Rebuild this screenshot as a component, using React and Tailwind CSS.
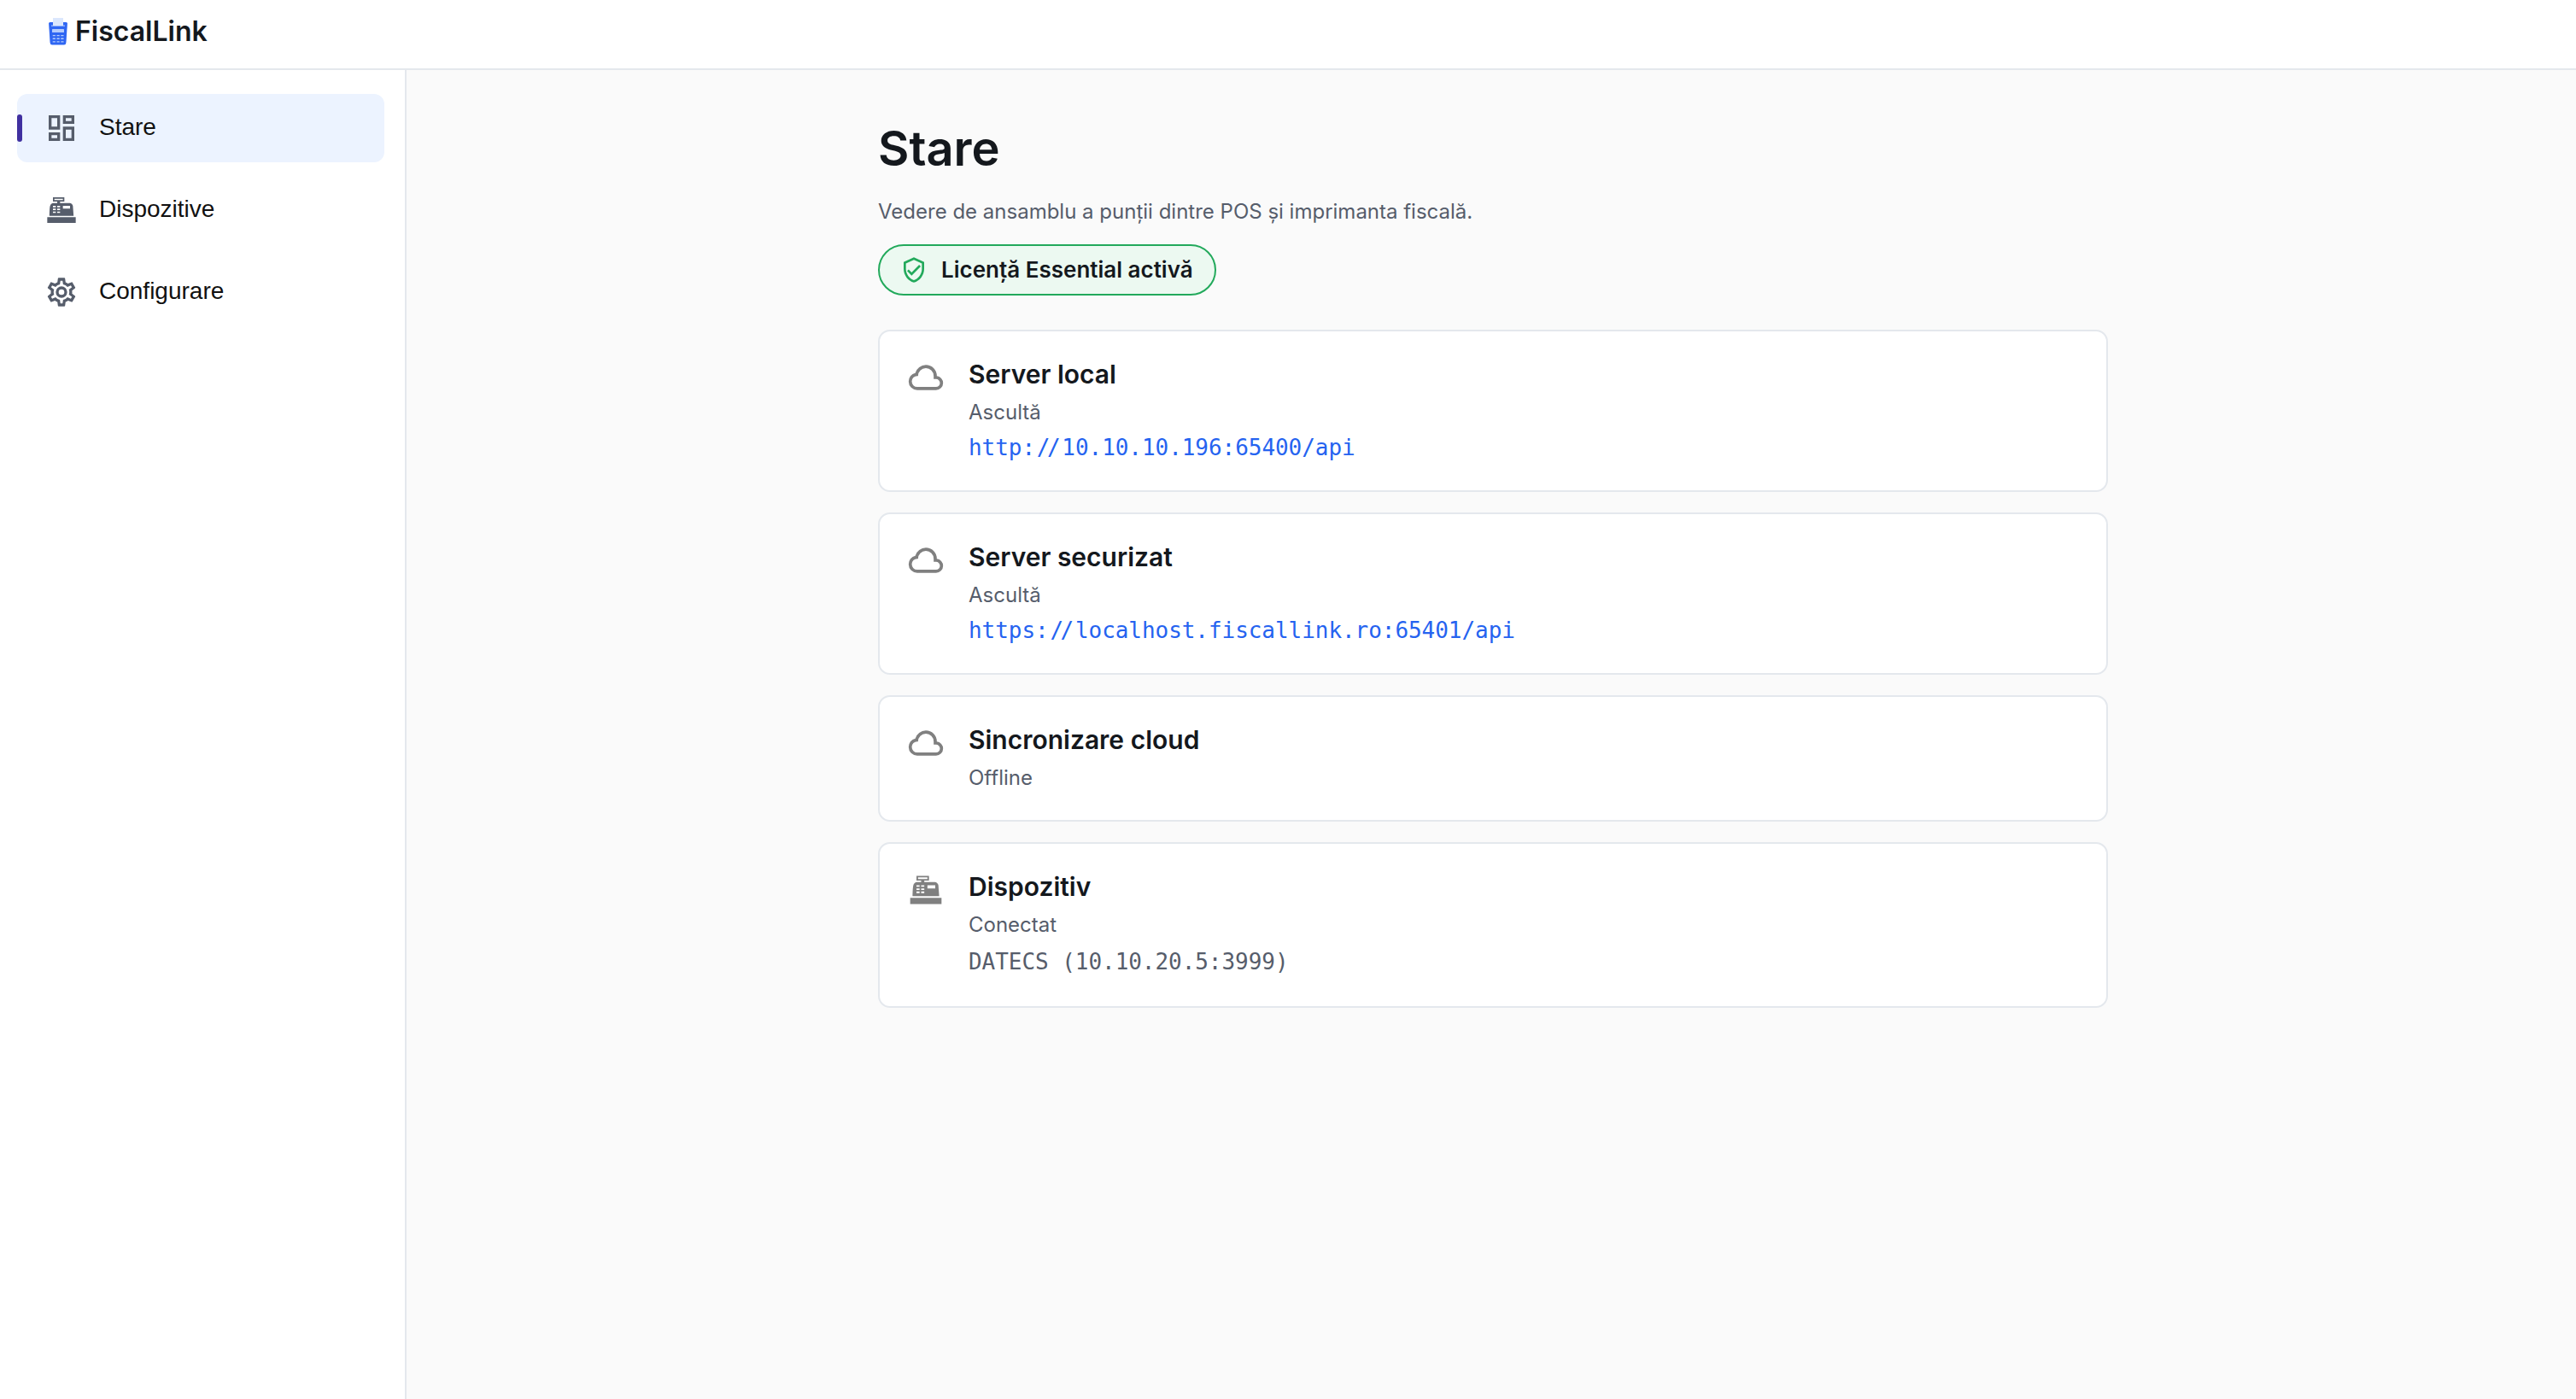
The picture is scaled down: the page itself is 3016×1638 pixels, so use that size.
import React from 'react';

const ICONS = {
  dashboard:
    'M19,5V7H15V5H19M9,5V11H5V5H9M19,13V19H15V13H19M9,17V19H5V17H9M21,3H13V9H21V3M11,3H3V13H11V3M21,11H13V21H21V11M11,15H3V21H11V15Z',
  register:
    'M2,17H22V21H2V17M6.25,7H9V6H6V3H14V6H11V7H17.8C18.8,7 19.8,8 20,9L20.5,16H3.5C3.55,14.2 3.6,10.5 4,9C4.25,8 5.25,7 6.25,7M13,9V11H18V9H13M6,9V10H8V9H6M9,9V10H11V9H9M6,11V12H8V11H6M9,11V12H11V11H9M6,13V14H8V13H6M9,13V14H11V13H9M7,4V5H13V4H7Z',
  cog:
    'M12,8A4,4 0 0,1 16,12A4,4 0 0,1 12,16A4,4 0 0,1 8,12A4,4 0 0,1 12,8M12,10A2,2 0 0,0 10,12A2,2 0 0,0 12,14A2,2 0 0,0 14,12A2,2 0 0,0 12,10M10,22C9.75,22 9.54,21.82 9.5,21.58L9.13,18.93C8.5,18.68 7.96,18.34 7.44,17.94L4.95,18.95C4.73,19.03 4.46,18.95 4.34,18.73L2.34,15.27C2.21,15.05 2.27,14.78 2.46,14.63L4.57,12.97L4.5,12L4.57,11L2.46,9.37C2.27,9.22 2.21,8.95 2.34,8.73L4.34,5.27C4.46,5.05 4.73,4.96 4.95,5.05L7.44,6.05C7.96,5.66 8.5,5.32 9.13,5.07L9.5,2.42C9.54,2.18 9.75,2 10,2H14C14.25,2 14.46,2.18 14.5,2.42L14.87,5.07C15.5,5.32 16.04,5.66 16.56,6.05L19.05,5.05C19.27,4.96 19.54,5.05 19.66,5.27L21.66,8.73C21.79,8.95 21.73,9.22 21.54,9.37L19.43,11L19.5,12L19.43,13L21.54,14.63C21.73,14.78 21.79,15.05 21.66,15.27L19.66,18.73C19.54,18.95 19.27,19.04 19.05,18.95L16.56,17.95C16.04,18.34 15.5,18.68 14.87,18.93L14.5,21.58C14.46,21.82 14.25,22 14,22H10M11.25,4L10.88,6.61C9.68,6.86 8.62,7.5 7.85,8.39L5.44,7.35L4.69,8.6L6.8,10.15C6.4,11.37 6.4,12.64 6.8,13.8L4.68,15.36L5.43,16.61L7.86,15.57C8.63,16.46 9.68,17.1 10.87,17.34L11.24,20H12.76L13.13,17.35C14.32,17.1 15.37,16.46 16.14,15.57L18.57,16.61L19.32,15.36L17.2,13.81C17.6,12.64 17.6,11.37 17.2,10.15L19.31,8.6L18.56,7.35L16.15,8.39C15.38,7.5 14.32,6.86 13.12,6.62L12.75,4H11.25Z',
  cloud:
    'M6.5 20Q4.22 20 2.61 18.43 1 16.85 1 14.58 1 12.63 2.17 11.1 3.35 9.57 5.25 9.15 5.88 6.85 7.75 5.43 9.63 4 12 4 14.93 4 16.96 6.04 19 8.07 19 11 20.73 11.2 21.86 12.5 23 13.78 23 15.5 23 17.38 21.69 18.69 20.38 20 18.5 20M6.5 18H18.5Q19.55 18 20.27 17.27 21 16.55 21 15.5 21 14.45 20.27 13.73 19.55 13 18.5 13H17V11Q17 8.93 15.54 7.46 14.08 6 12 6 9.93 6 8.46 7.46 7 8.93 7 11H6.5Q5.05 11 4.03 12.03 3 13.05 3 14.5 3 15.95 4.03 17 5.05 18 6.5 18Z',
  shield:
    'M21,11C21,16.55 17.16,21.74 12,23C6.84,21.74 3,16.55 3,11V5L12,1L21,5V11M12,21C15.75,20 19,15.54 19,11.22V6.3L12,3.18L5,6.3V11.22C5,15.54 8.25,20 12,21M10,17L6,13L7.41,11.59L10,14.17L16.59,7.58L18,9L10,17Z',
};

const Icon = ({ name, className }) => (
  <svg viewBox="0 0 24 24" fill="currentColor" fillRule="evenodd" className={className}>
    <path d={ICONS[name]} />
  </svg>
);

const Logo = () => (
  <svg viewBox="0 0 22 32" className="w-[22px] h-8 shrink-0">
    <path d="M1.6 5H20.4Q22 5 21.9 6.6L20.4 29Q20.2 31.5 18 31.5H4Q1.8 31.5 1.6 29L0.1 6.6Q0 5 1.6 5Z" fill="#2f66f3" />
    <path d="M3 8.6H19V9.8H3Z" fill="#a9c3fb" />
    <path d="M5 0H17V9H5Z" fill="#dbe7fd" />
    <rect x="4" y="13" width="14" height="4" rx="0.6" fill="#b4cbfc" />
    {[20, 23.6, 27.2].map((y) =>
      [4.6, 9.4, 14.2].map((x) => (
        <rect key={`${x}-${y}`} x={x} y={y} width="3.4" height="1.3" rx="0.5" fill="#b4cbfc" />
      ))
    )}
  </svg>
);

const navItems = [
  { label: 'Stare', icon: 'dashboard', active: true },
  { label: 'Dispozitive', icon: 'register' },
  { label: 'Configurare', icon: 'cog' },
];

const cards = [
  { title: 'Server local', icon: 'cloud', status: 'Ascultă', url: 'http://10.10.10.196:65400/api' },
  { title: 'Server securizat', icon: 'cloud', status: 'Ascultă', url: 'https://localhost.fiscallink.ro:65401/api' },
  { title: 'Sincronizare cloud', icon: 'cloud', status: 'Offline' },
  { title: 'Dispozitiv', icon: 'register', status: 'Conectat', detail: 'DATECS (10.10.20.5:3999)' },
];

const NavItem = ({ label, icon, active }) => (
  <a
    className={`relative flex items-center h-20 pl-8 gap-6 rounded-xl ${active ? 'bg-[#ecf3ff]' : ''}`}
  >
    {active && <span className="absolute left-0 top-6 w-1.5 h-8 rounded-full bg-[#4030a0]" />}
    <Icon name={icon} className="w-10 h-10 text-[#565d6b]" />
    <span className="pb-[3px] text-[28px] leading-9 text-[#111111] font-['Liberation_Sans',sans-serif]">
      {label}
    </span>
  </a>
);

// the double slash is set tighter than the rest of the address
const Url = ({ value }) => {
  const [scheme, rest] = value.split('//');

  return (
    <a className="block mt-1.5 text-[26px] leading-9 tracking-[-0.05px] text-[#2563f0] font-['DejaVu_Sans_Mono',monospace]">
      {scheme}
      <span className="tracking-[-3.6px] pl-[1.8px] mr-[5.4px]">//</span>
      {rest}
    </a>
  );
};

const StatusCard = ({ title, icon, status, url, detail }) => (
  <section className="flex gap-7 p-8 bg-white border-2 border-[#e4e8ed] rounded-[14px]">
    <Icon name={icon} className="w-11 h-11 shrink-0 text-[#808080]" />
    <div>
      <h2 className="text-[30px] leading-9 font-semibold text-[#14181d]">{title}</h2>
      <p className="mt-2.5 text-[24px] leading-[34px] text-[#565d6b]">{status}</p>
      {url && <Url value={url} />}
      {detail && (
        <p className="mt-1.5 text-[26px] leading-10 tracking-[-0.05px] text-[#565d6b] font-['DejaVu_Sans_Mono',monospace]">
          {detail}
        </p>
      )}
    </div>
  </section>
);

const App = () => {
  return (
    <div className="flex flex-col h-screen overflow-hidden bg-white font-['Inter',sans-serif]">
      {/* HEADER */}
      <header className="flex items-center gap-[9px] h-[82px] shrink-0 pl-[57px] pb-1.5 bg-white border-b-2 border-[#e4e8ed]">
        <Logo />
        <span className="text-[32px] leading-10 font-semibold text-[#14181d]">FiscalLink</span>
      </header>

      <div className="flex flex-1 min-h-0">
        {/* SIDEBAR */}
        <nav className="flex flex-col gap-4 w-[476px] shrink-0 pt-7 pl-5 pr-6 bg-white border-r-2 border-[#e4e8ed]">
          {navItems.map((item) => (
            <NavItem key={item.label} {...item} />
          ))}
        </nav>

        {/* CONTENT */}
        <main className="flex-1 pt-[60px] pl-1 bg-[#fafafa]">
          <div className="w-[1440px] mx-auto">
            <h1 className="text-[56px] leading-[64px] font-semibold text-[#14181d]">Stare</h1>
            <p className="mt-[21px] text-[24px] leading-[42px] text-[#565d6b]">
              Vedere de ansamblu a punții dintre POS și imprimanta fiscală.
            </p>

            <div className="inline-flex items-center gap-4 h-[60px] mt-[17px] pl-6 pr-[25px] bg-[#ecf9f1] border-2 border-[#22a95b] rounded-full align-top">
              <Icon name="shield" className="w-8 h-8 text-[#22a95b]" />
              <span className="text-[26px] leading-9 font-semibold text-[#14181d]">
                Licență Essential activă
              </span>
            </div>

            <div className="flex flex-col gap-6 mt-10">
              {cards.map((card) => (
                <StatusCard key={card.title} {...card} />
              ))}
            </div>
          </div>
        </main>
      </div>
    </div>
  );
};

export default App;
